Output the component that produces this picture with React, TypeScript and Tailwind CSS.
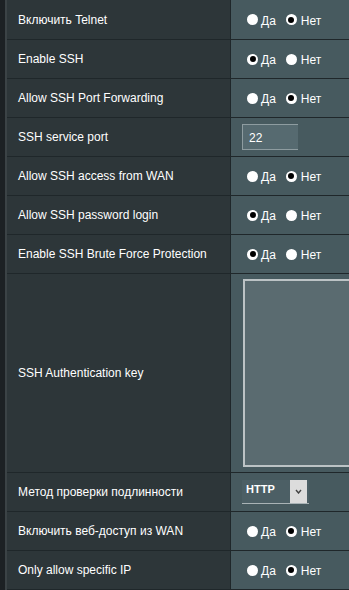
import React from "react";

type RowKind =
  | { type: "radio"; yes: boolean }
  | { type: "input"; value: string }
  | { type: "textarea" }
  | { type: "select"; value: string };

const rows: { label: string; kind: RowKind; h: string }[] = [
  { label: "Включить Telnet", kind: { type: "radio", yes: false }, h: "h-[40px]" },
  { label: "Enable SSH", kind: { type: "radio", yes: true }, h: "h-[39px]" },
  { label: "Allow SSH Port Forwarding", kind: { type: "radio", yes: false }, h: "h-[39px]" },
  { label: "SSH service port", kind: { type: "input", value: "22" }, h: "h-[39px]" },
  { label: "Allow SSH access from WAN", kind: { type: "radio", yes: false }, h: "h-[39px]" },
  { label: "Allow SSH password login", kind: { type: "radio", yes: true }, h: "h-[39px]" },
  { label: "Enable SSH Brute Force Protection", kind: { type: "radio", yes: true }, h: "h-[39px]" },
  { label: "SSH Authentication key", kind: { type: "textarea" }, h: "h-[199px]" },
  { label: "Метод проверки подлинности", kind: { type: "select", value: "HTTP" }, h: "h-[39px]" },
  { label: "Включить веб-доступ из WAN", kind: { type: "radio", yes: false }, h: "h-[39px]" },
  { label: "Only allow specific IP", kind: { type: "radio", yes: false }, h: "h-[39px]" },
];

function Radio({ checked }: { checked: boolean }) {
  return (
    <span className="w-[11px] h-[11px] rounded-full bg-white flex items-center justify-center shrink-0">
      {checked && <span className="w-[6px] h-[6px] rounded-full bg-black" />}
    </span>
  );
}

function RadioPair({ yes }: { yes: boolean }) {
  return (
    <div className="flex items-center text-[12px] text-white leading-none">
      <Radio checked={yes} />
      <span className="ml-[3px] mt-[2px]">Да</span>
      <span className="ml-[10px]">
        <Radio checked={!yes} />
      </span>
      <span className="ml-[4px] mt-[2px]">Нет</span>
    </div>
  );
}

function Value({ kind }: { kind: RowKind }) {
  if (kind.type === "radio") {
    return (
      <div className="pl-[16px] h-full flex items-center">
        <RadioPair yes={kind.yes} />
      </div>
    );
  }
  if (kind.type === "input") {
    return (
      <div className="pl-[11px] h-full flex items-center">
        <div className="w-[56px] h-[26px] bg-[#566a70] border-t border-b border-l border-[#8e9ca0] flex items-center pl-[6px] text-[12px] text-white leading-none pt-[1px]">
          {kind.value}
        </div>
      </div>
    );
  }
  if (kind.type === "select") {
    return (
      <div className="pl-[11px] h-full flex items-center">
        <div className="w-[67px] h-[24px] flex border-b border-[#a9b3b6] bg-[#4c5f65]">
          <div className="flex-1 pl-[4px] pt-[4px] text-[11px] font-bold text-white leading-none">
            {kind.value}
          </div>
          <div className="w-[17px] h-full bg-[#dcdcdc] flex items-center justify-center mr-[2px]">
            <svg width="7" height="5" viewBox="0 0 7 5">
              <path d="M1 1 L3.5 4 L6 1" stroke="#444" strokeWidth="1.4" fill="none" />
            </svg>
          </div>
        </div>
      </div>
    );
  }
  return (
    <div className="pl-[12px] h-full flex items-center overflow-hidden">
      <div className="w-[140px] h-[188px] shrink-0 border-2 border-[#bcc3c5] bg-[#5a6b70]" />
    </div>
  );
}

export default function App() {
  return (
    <div
      className="w-[349px] h-[590px] flex bg-[#1c2124] overflow-hidden"
      style={{ fontFamily: '"Liberation Sans", Arial, sans-serif' }}
    >
      <div className="w-[5px] bg-[#1c2124]" />
      <div className="w-[2px] bg-[#3b4346]" />
      <div className="flex-1 flex flex-col min-w-0">
        {rows.map((r, i) => (
          <div key={i} className={`flex border-b border-[#1f272a] shrink-0 ${r.h}`}>
            <div className="w-[224px] shrink-0 bg-[#2d3639] border-r border-[#1f272a] flex items-center pl-[11px] text-[12px] text-white whitespace-nowrap">
              {r.label}
            </div>
            <div className="flex-1 bg-[#475a5f] min-w-0 overflow-hidden">
              <Value kind={r.kind} />
            </div>
          </div>
        ))}
      </div>
    </div>
  );
}
